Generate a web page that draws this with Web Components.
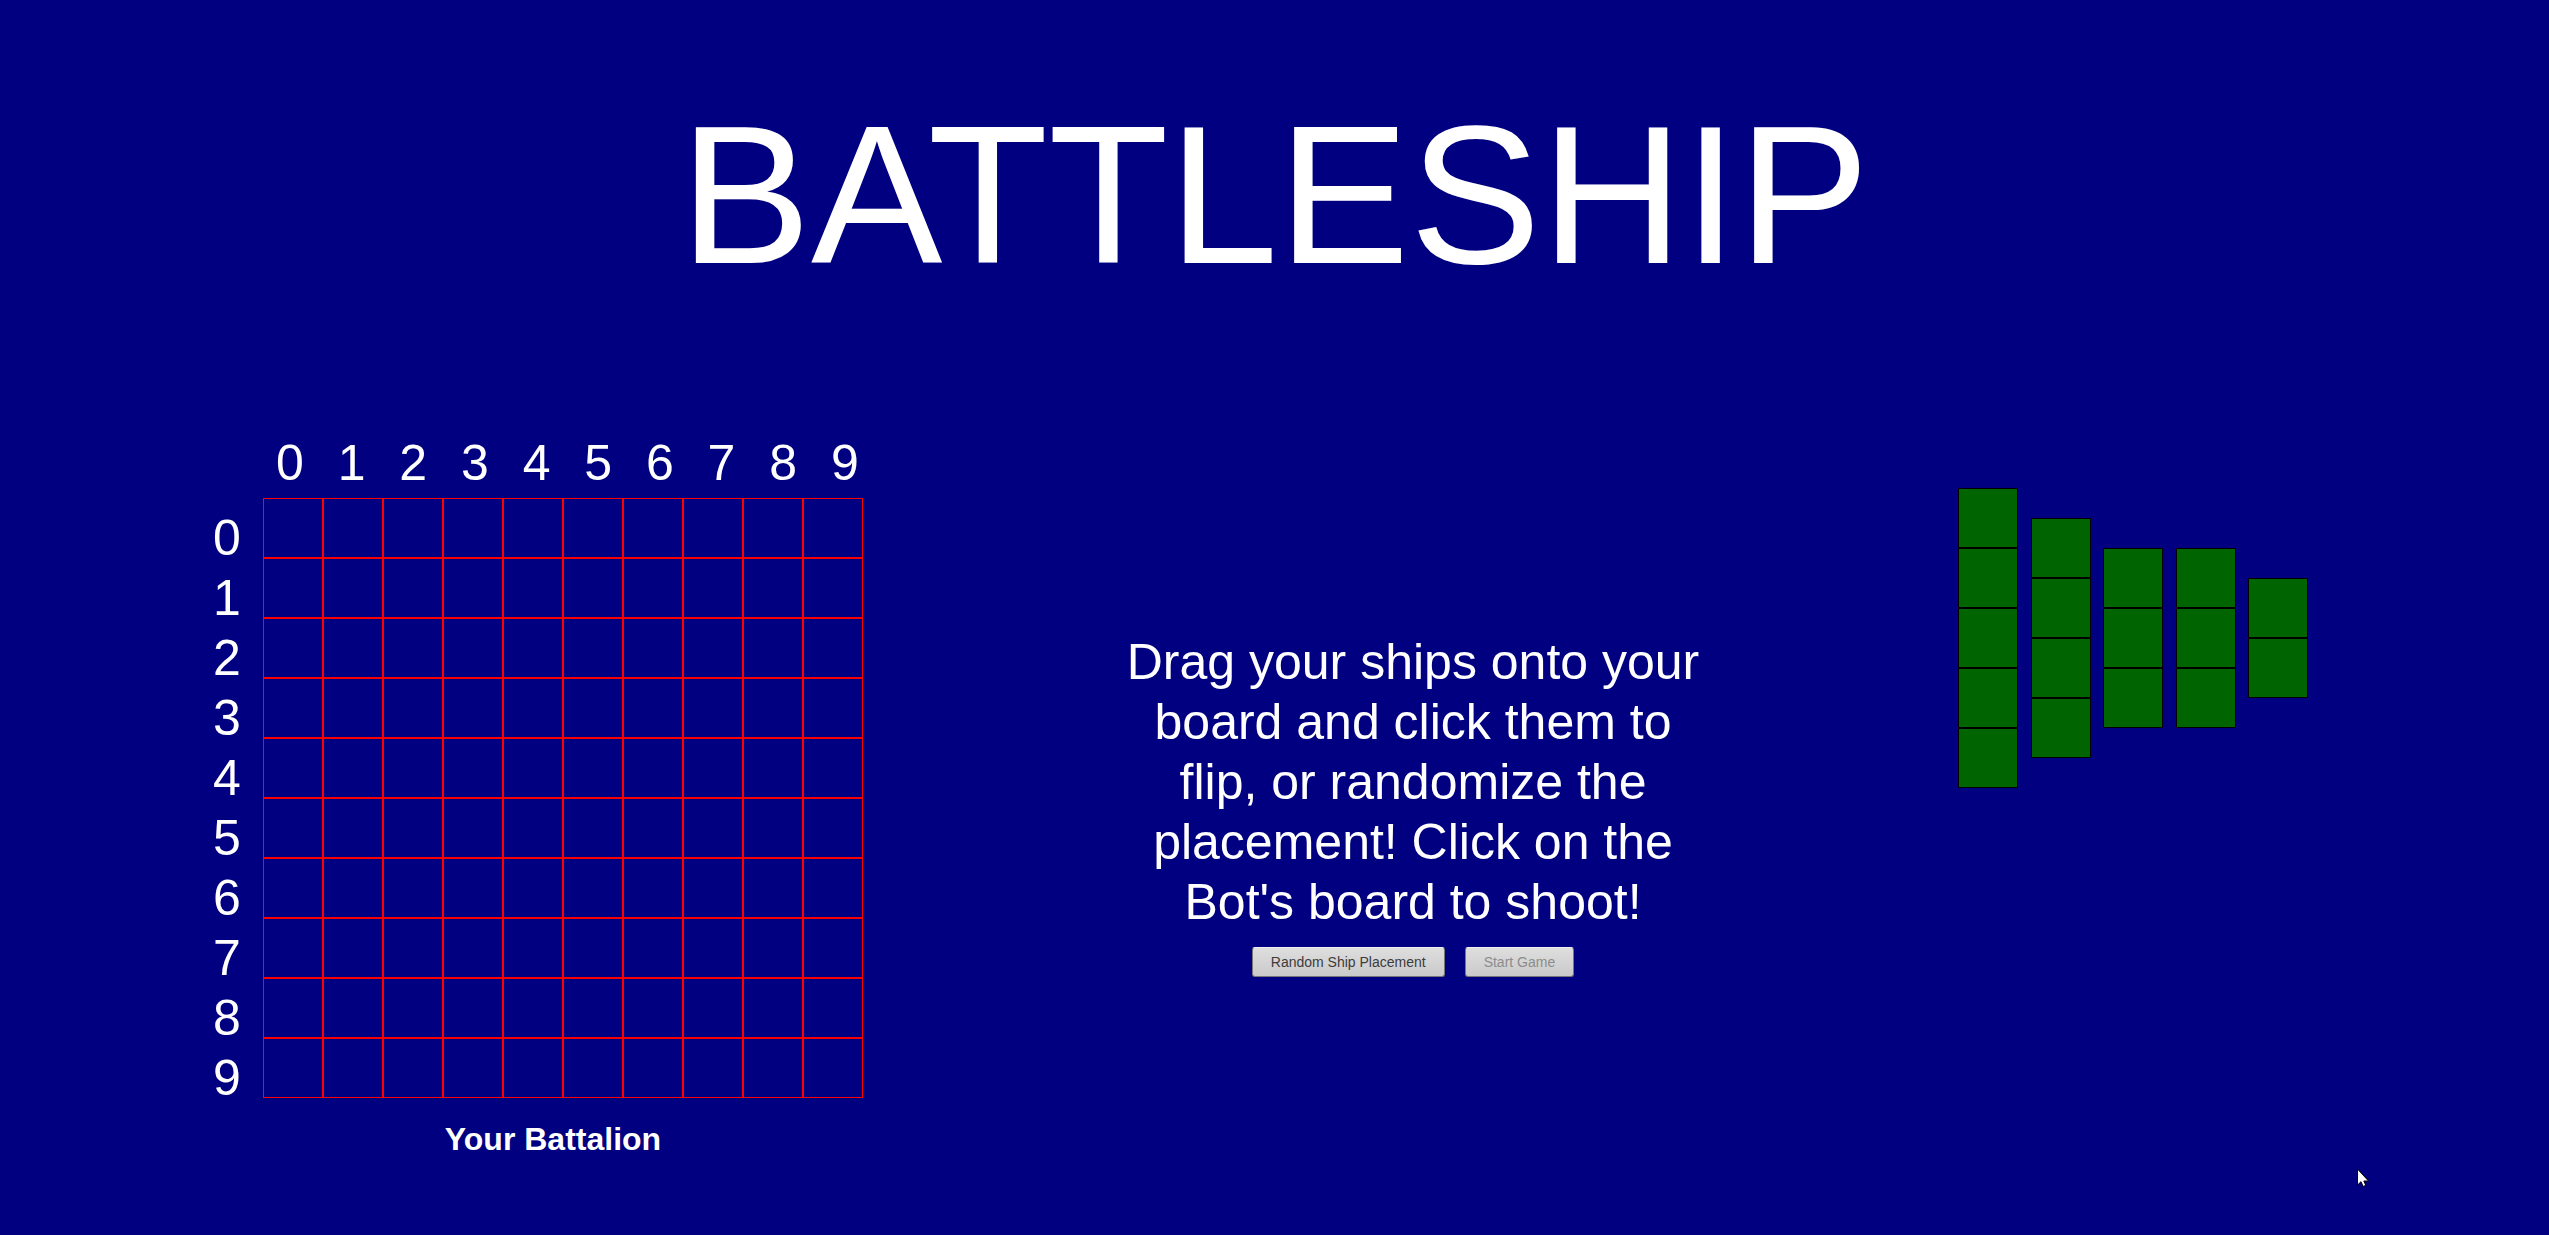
<!DOCTYPE html>
<html lang="en">
<head>
<meta charset="utf-8">
<title>Battleship</title>
<style>
html, body { margin: 0; min-height: 100%; background: #000080; }
body { color: #fff; font-family: "Liberation Sans", Arial, Helvetica, sans-serif; }
</style>
</head>
<body>
<battle-game></battle-game>
<script>
class BattleBoard extends HTMLElement {
  connectedCallback() {
    const root = this.attachShadow({ mode: 'open' });
    const digits = [...Array(10).keys()].map(n => `<span>${n}</span>`).join('');
    root.innerHTML = `
      <style>
        :host { display: grid; grid-template-columns: 50px 600px; font-size: 50px; line-height: 60px; }
        .cols { grid-column: 2; display: flex; justify-content: space-between; padding: 0 4px 0 13px; height: 65px; }
        .cols span { width: 28px; }
        .rows { display: flex; flex-direction: column; padding-top: 10px; height: 590px; }
        .cells { display: grid; grid-template-columns: repeat(10, 60px); grid-auto-rows: 60px; align-self: start; }
        .cells div { box-sizing: border-box; border: 1px solid #f00; }
        .caption { grid-column: 1 / 3; text-align: center; padding-left: 30px; font-size: 32px; line-height: 38px; font-weight: bold; margin: 22px 0 0; }
      </style>
      <div class="cols">${digits}</div>
      <div class="rows">${digits}</div>
      <div class="cells">${'<div></div>'.repeat(100)}</div>
      <h2 class="caption"><slot></slot></h2>`;
  }
}
customElements.define('battle-board', BattleBoard);

class BattleShip extends HTMLElement {
  connectedCallback() {
    const root = this.attachShadow({ mode: 'open' });
    root.innerHTML = `
      <style>
        :host { display: block; width: 60px; cursor: grab; }
        div { box-sizing: border-box; height: 60px; background: #006400; border: 1px solid #000; }
      </style>
      ${'<div></div>'.repeat(Number(this.getAttribute('size')))}`;
  }
}
customElements.define('battle-ship', BattleShip);

class GameButton extends HTMLElement {
  connectedCallback() {
    const root = this.attachShadow({ mode: 'open' });
    root.innerHTML = `
      <style>
        :host { display: block; }
        button { display: block; box-sizing: border-box; height: 30px; margin: 0; padding: 0 18px; font: 14px/26px "Liberation Sans", Arial, sans-serif;
          color: #3c3c3c; background: linear-gradient(#dedede, #cacaca); border: 1px solid #777; border-top-color: #eee; border-radius: 3px; }
        button:disabled { color: #8c8c8c; }
      </style>
      <button type="button"${this.hasAttribute('disabled') ? ' disabled' : ''}><slot></slot></button>`;
  }
}
customElements.define('game-button', GameButton);

class GameControls extends HTMLElement {
  connectedCallback() {
    const root = this.attachShadow({ mode: 'open' });
    root.innerHTML = `
      <style>
        :host { display: flex; flex-direction: column; align-items: center; }
        p { margin: 0; max-width: 600px; text-align: center; font-size: 50px; line-height: 60px; }
        .buttons { display: flex; gap: 20px; margin-top: 15px; }
      </style>
      <p><slot></slot></p>
      <div class="buttons">
        <game-button>Random Ship Placement</game-button>
        <game-button disabled>Start Game</game-button>
      </div>`;
  }
}
customElements.define('game-controls', GameControls);

class BattleGame extends HTMLElement {
  connectedCallback() {
    const root = this.attachShadow({ mode: 'open' });
    root.innerHTML = `
      <style>
        :host { display: block; }
        h1 { margin: 0; padding-top: 83px; text-align: center; font-size: 197px; line-height: 224px; font-weight: normal; }
        main { display: grid; grid-template-columns: 650px 1fr 350px; padding: 126px 241px 0 213px; align-items: start; }
        game-controls { padding: 199px 0 0 5px; }
        .fleet { display: flex; justify-content: space-between; align-items: center; margin-top: 55px; }
        svg { position: absolute; left: 2357px; top: 1168px; }
      </style>
      <h1>BATTLESHIP</h1>
      <main>
        <battle-board>Your Battalion</battle-board>
        <game-controls>Drag your ships onto your board and click them to flip, or randomize the placement! Click on the Bot's board to shoot!</game-controls>
        <div class="fleet">
          <battle-ship size="5"></battle-ship>
          <battle-ship size="4"></battle-ship>
          <battle-ship size="3"></battle-ship>
          <battle-ship size="3"></battle-ship>
          <battle-ship size="2"></battle-ship>
        </div>
      </main>
      <svg width="13" height="20" viewBox="0 0 13 20" aria-hidden="true">
        <path d="M.5 1v16l3.500-3.300 2.200 4.800 2.600-1.200-2-4.300H11.500Z" fill="#fff" stroke="#000"/>
      </svg>`;
  }
}
customElements.define('battle-game', BattleGame);
</script>
</body>
</html>
